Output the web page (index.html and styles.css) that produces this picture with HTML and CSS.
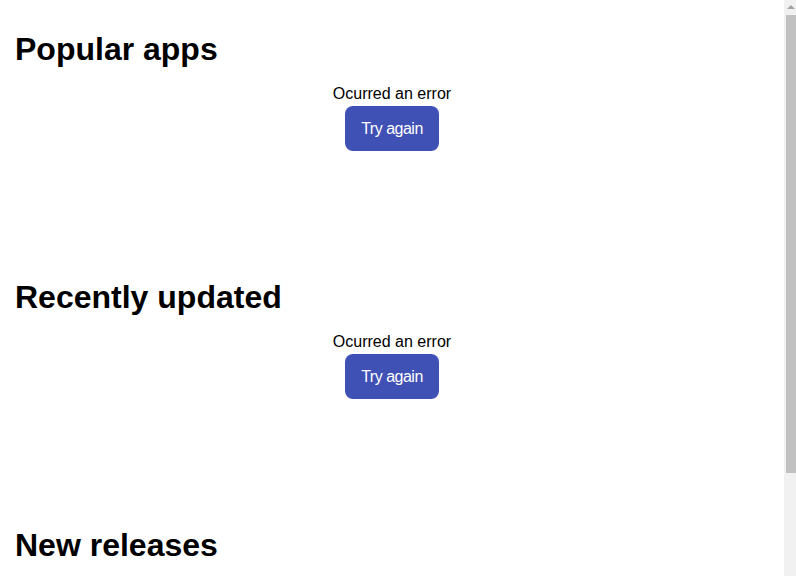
FILE: index.html
```html
<!DOCTYPE html>
<html>
<head>
<meta charset="utf-8">
<link rel="stylesheet" href="styles.css">
</head>
<body>
<main class="page">
  <section class="block">
    <h2 class="title">Popular apps</h2>
    <div class="error">
      <p class="error-text">Ocurred an error</p>
      <button class="retry">Try again</button>
    </div>
  </section>
  <section class="block">
    <h2 class="title">Recently updated</h2>
    <div class="error">
      <p class="error-text">Ocurred an error</p>
      <button class="retry">Try again</button>
    </div>
  </section>
  <section class="block last">
    <h2 class="title">New releases</h2>
    <div class="error">
      <p class="error-text">Ocurred an error</p>
      <button class="retry">Try again</button>
    </div>
  </section>
</main>
<div class="scrollbar" aria-hidden="true">
  <div class="scroll-up"></div>
  <div class="scroll-thumb"></div>
</div>
</body>
</html>
```
FILE: styles.css
```css
html, body {
  margin: 0;
  padding: 0;
  background: #ffffff;
}
body {
  font-family: "Liberation Sans", Arial, sans-serif;
  color: #000;
  overflow: hidden;
}
.page {
  padding: 0 28px 0 16px;
}
.block {
  height: 248px;
  display: flex;
  flex-direction: column;
}
.block.last {
  height: 190px;
}
.title {
  margin: 31px 0 0 -1px;
  font-size: 32px;
  line-height: 37px;
  font-weight: bold;
}
.error {
  display: flex;
  flex-direction: column;
  align-items: center;
  margin-top: 17px;
}
.error-text {
  margin: 0;
  font-size: 16px;
  line-height: 18px;
}
.retry {
  margin-top: 3px;
  border: none;
  background: #3f51b5;
  color: #fff;
  font-family: "Liberation Sans", Arial, sans-serif;
  font-size: 16px;
  letter-spacing: -0.5px;
  line-height: 21px;
  padding: 12px 16px;
  border-radius: 8px;
  cursor: pointer;
}
.scrollbar {
  position: fixed;
  top: 0;
  right: 0;
  width: 12px;
  height: 576px;
  background: #f1f1f1;
}
.scroll-up {
  position: absolute;
  top: 5px;
  left: 3px;
  width: 0;
  height: 0;
  border-left: 4px solid transparent;
  border-right: 4px solid transparent;
  border-bottom: 4px solid #a3a3a3;
}
.scroll-thumb {
  position: absolute;
  top: 15px;
  left: 2px;
  width: 10px;
  height: 458px;
  background: #c1c1c1;
}
```
